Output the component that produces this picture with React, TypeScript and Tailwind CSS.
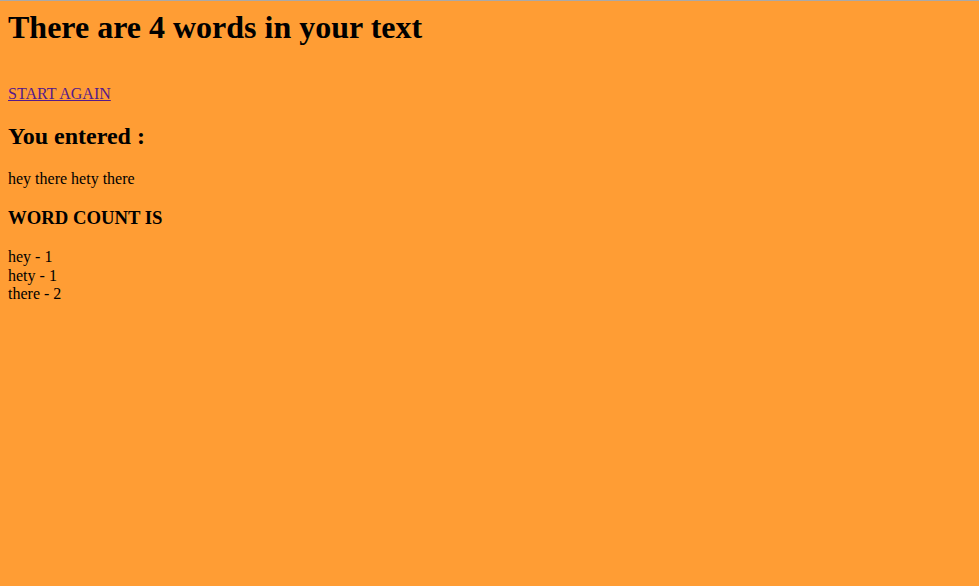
export default function App() {
  const counts = [
    { word: "hey", n: 1 },
    { word: "hety", n: 1 },
    { word: "there", n: 2 },
  ];

  return (
    <div className="min-h-screen w-full bg-[#ff9d34] text-black font-['Liberation_Serif','Times_New_Roman',serif] border-t border-[#a9a9a9]">
      <div className="px-2 pt-2">
        <h1 className="text-[32px] font-bold leading-[normal] mb-[39px]">
          There are 4 words in your text
        </h1>

        <div className="text-base leading-[normal]">
          <a href="#" className="text-[#551a8b] underline">
            START AGAIN
          </a>
        </div>

        <h2 className="text-2xl font-bold leading-[normal] mt-[19.92px] mb-[19.92px]">
          You entered :
        </h2>

        <p className="text-base leading-[normal]">hey there hety there</p>

        <h3 className="text-[18.72px] font-bold leading-[normal] mt-[18.72px] mb-[19.5px]">
          WORD COUNT IS
        </h3>

        <div className="text-base leading-[18.5px]">
          {counts.map((c) => (
            <div key={c.word}>
              {c.word} - {c.n}
            </div>
          ))}
        </div>
      </div>
    </div>
  );
}
